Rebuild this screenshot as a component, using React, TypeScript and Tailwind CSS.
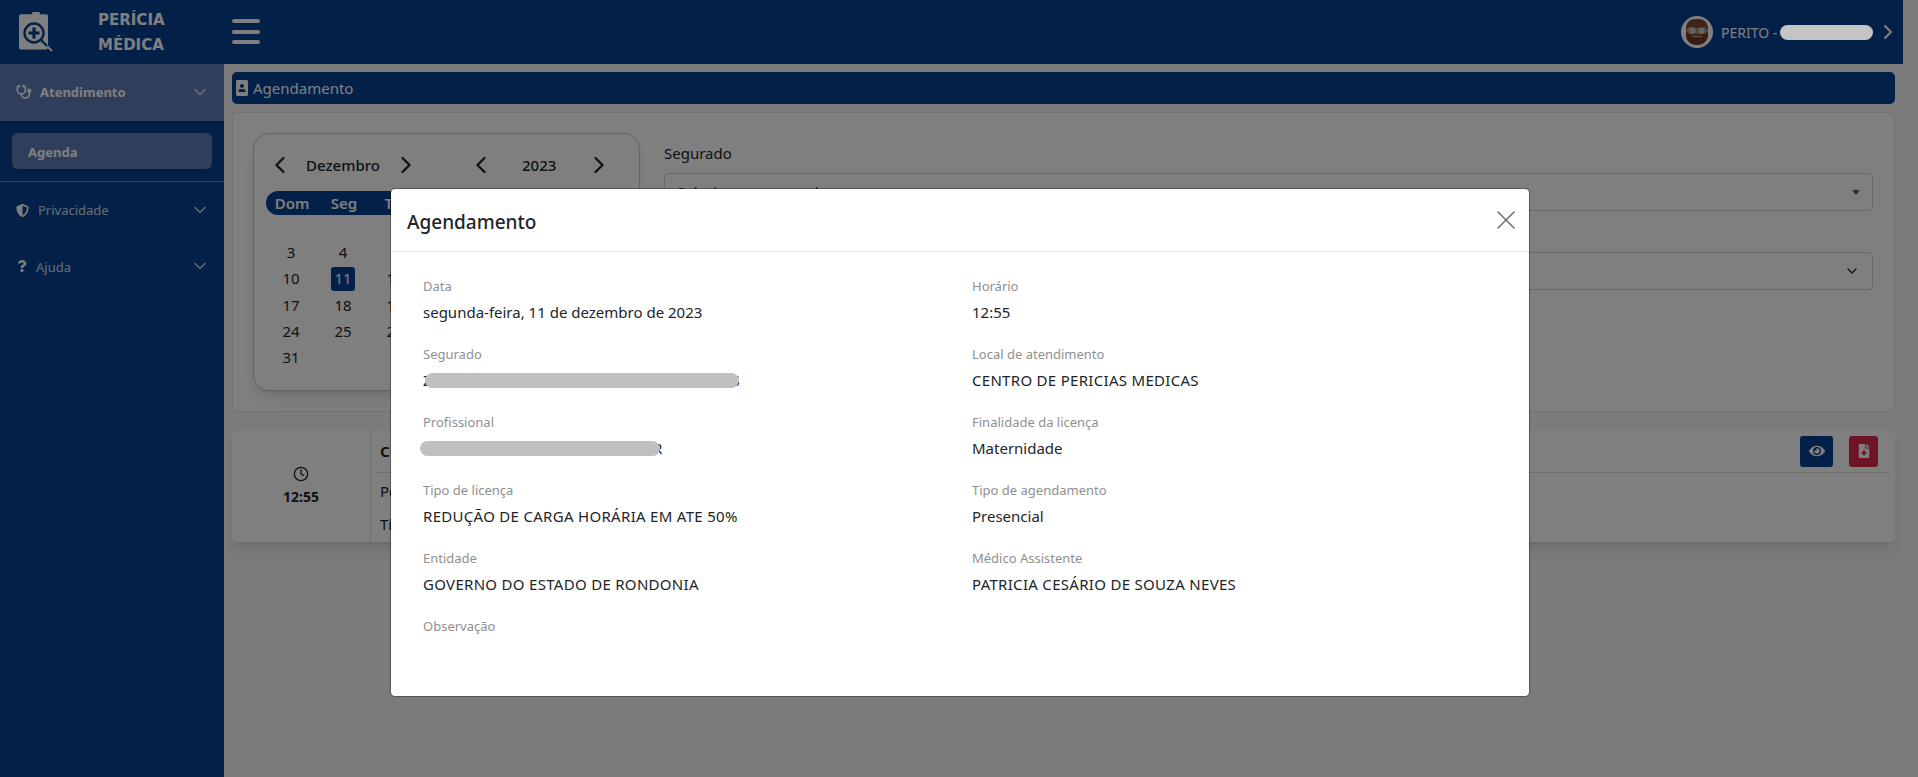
import { ChevronDown, ChevronLeft, ChevronRight, Clock, Stethoscope, X } from 'lucide-react'
import { FaEye, FaFileMedical, FaPortrait, FaQuestion, FaShieldAlt } from 'react-icons/fa'

const fontStack = 'font-["Noto_Sans","Open_Sans",sans-serif]'

const weekDays = ['Dom', 'Seg', 'Ter', 'Qua', 'Qui', 'Sex', 'Sáb']
const days: (number | null)[] = [null, null, null, null, null, 1, 2]
for (let day = 3; day <= 31; day++) days.push(day)

function Logo() {
    return (
        <svg viewBox="0 0 34 40" className="h-10 w-[34px] shrink-0">
            <path d="M13 3.5a4 4 0 0 1 8 0h6a2 2 0 0 1 2 2V38a2 2 0 0 1-2 2H2a2 2 0 0 1-2-2V5.5a2 2 0 0 1 2-2h11z" fill="#fff" transform="translate(0 -1) scale(1 .96)" />
            <circle cx="15" cy="21" r="9.5" fill="none" stroke="#064091" strokeWidth="2.4" />
            <path d="M15 15.5v11M9.5 21h11" stroke="#064091" strokeWidth="3.2" />
            <path d="M22 28l11 11" stroke="#064091" strokeWidth="2.4" />
            <path d="M28 34l5 5" stroke="#fff" strokeWidth="2" />
        </svg>
    )
}

function Avatar() {
    return (
        <svg viewBox="0 0 32 32" className="h-8 w-8 shrink-0">
            <circle cx="16" cy="16" r="16" fill="#fff" />
            <path d="M5 13C5 6 9 3 16 3s11 3 11 10v5c0 7-5 11-11 11S5 25 5 18z" fill="#b08a6f" />
            <path d="M5 14C5 6 9 3 16 3s11 3 11 11l-3-3c-4 1-12 1-16 0z" fill="#7a4a36" />
            <path d="M5 15l3 3c3 1 5 0 8 0s5 1 8 0l3-3v4c0 6-5 10-11 10S5 25 5 19z" fill="#6e3d2a" />
            <circle cx="11.5" cy="14.5" r="2.6" fill="#d9b9a2" stroke="#ddd" />
            <circle cx="20.5" cy="14.5" r="2.6" fill="#a8cfc9" stroke="#ddd" />
            <path d="M11 21c2-1 4-1 5 0 1-1 3-1 5 0" stroke="#e9c5ae" strokeWidth="1" fill="none" />
        </svg>
    )
}

function Calendar() {
    return (
        <div className="h-[258px] w-[387px] shrink-0 rounded-2xl border border-[#c8c8c8] bg-white px-3 pt-[19px] shadow-lg">
            <div className="flex h-6 items-center text-[15px] font-medium text-[#212529]">
                <ChevronLeft className="h-7 w-7 shrink-0" />
                <span className="ml-3 w-[75px]">Dezembro</span>
                <ChevronRight className="ml-[11px] h-7 w-7 shrink-0" />
                <ChevronLeft className="ml-[47px] h-7 w-7 shrink-0" />
                <span className="ml-[27px] w-9">2023</span>
                <ChevronRight className="ml-[27px] h-7 w-7 shrink-0" />
            </div>
            <div className="mt-[14px] grid h-6 grid-cols-[repeat(7,52px)] items-center rounded-full bg-[#064091] text-center text-[15px] font-semibold text-white">
                {weekDays.map((day) => (
                    <span key={day}>{day}</span>
                ))}
            </div>
            <div className="-ml-px -mt-[2px] grid grid-cols-[repeat(7,52px)] text-center text-[15px] text-[#212529]">
                {days.map((day, index) => (
                    <div key={index} className="flex h-[26.3px] items-center justify-center">
                        {day === 11 ? (
                            <span className="flex h-6 w-6 items-center justify-center rounded-[3px] bg-[#064091] text-white">{day}</span>
                        ) : (
                            day
                        )}
                    </div>
                ))}
            </div>
        </div>
    )
}

function Sidebar() {
    return (
        <aside className="flex w-56 shrink-0 flex-col bg-[#064091] text-[13px] text-white">
            <div className="flex h-[57px] items-center bg-[#5f7db5] pb-px pl-4 pr-[14px] font-bold">
                <Stethoscope className="h-4 w-4" strokeWidth={2.5} />
                <span className="ml-2 pt-[2px]">Atendimento</span>
                <ChevronDown className="ml-auto h-5 w-5 opacity-70" />
            </div>
            <div className="border-b border-[#5f7db5] px-3 py-3">
                <div className="flex h-9 items-center rounded-md bg-[#5f7db5] px-4 pt-[3px] font-bold">Agenda</div>
            </div>
            <div className="flex h-[56px] items-center pl-4 pr-[14px]">
                <FaShieldAlt className="h-[13px] w-[13px]" />
                <span className="ml-[9px] pt-[2px] opacity-80">Privacidade</span>
                <ChevronDown className="ml-auto h-5 w-5 opacity-70" />
            </div>
            <div className="flex h-[56px] items-center pl-4 pr-[14px]">
                <FaQuestion className="h-3 w-3" />
                <span className="ml-2 pt-1 opacity-80">Ajuda</span>
                <ChevronDown className="ml-auto h-5 w-5 opacity-70" />
            </div>
        </aside>
    )
}

function Field({ label, caps, children }: { label: string; caps?: boolean; children?: React.ReactNode }) {
    return (
        <div className="h-[68px] pt-[11px]">
            <div className="text-[13px] leading-5 text-[#8f8f8f]">{label}</div>
            <div className={`mt-[6px] flex h-5 items-center text-[15px] leading-5 text-[#212529] ${caps ? 'tracking-[0.3px]' : ''}`}>{children}</div>
        </div>
    )
}

function Redacted({ className }: { className: string }) {
    return <span className={`relative z-10 h-[15px] rounded-full bg-[#c0c0c0] ${className}`} />
}

function Modal() {
    return (
        <div className="absolute inset-0 bg-black/50">
            {/* mascara do nome no cabecalho, fica por cima do backdrop */}
            <span className="absolute left-[1780px] top-[25px] h-[15px] w-[93px] rounded-full bg-[#c4c4c4]" />
            <div className="absolute left-[390px] top-[188px] h-[509px] w-[1140px] rounded-[5px] border border-black/30 bg-white bg-clip-padding">
                <div className="flex h-[63px] items-center justify-between border-b border-[#dee2e6] pl-4 pr-[7px]">
                    <h5 className="pt-1 text-[19px] font-medium text-[#212529]">Agendamento</h5>
                    <X className="h-8 w-8 text-[#6f6f6f]" strokeWidth={1.2} />
                </div>
                <div className="grid grid-cols-[549px_1fr] pl-8 pt-[13px]">
                    <Field label="Data">segunda-feira, 11 de dezembro de 2023</Field>
                    <Field label="Horário">12:55</Field>
                    <Field label="Segurado">
                        <span>Z</span>
                        <Redacted className="-ml-[7px] w-[314px]" />
                        <span className="-ml-[7px]">S</span>
                    </Field>
                    <Field label="Local de atendimento" caps>CENTRO DE PERICIAS MEDICAS</Field>
                    <Field label="Profissional">
                        <Redacted className="-ml-[3px] w-[240px]" />
                        <span className="-ml-[7px]">R</span>
                    </Field>
                    <Field label="Finalidade da licença">Maternidade</Field>
                    <Field label="Tipo de licença" caps>REDUÇÃO DE CARGA HORÁRIA EM ATE 50%</Field>
                    <Field label="Tipo de agendamento">Presencial</Field>
                    <Field label="Entidade" caps>GOVERNO DO ESTADO DE RONDONIA</Field>
                    <Field label="Médico Assistente" caps>PATRICIA CESÁRIO DE SOUZA NEVES</Field>
                    <Field label="Observação" />
                </div>
            </div>
        </div>
    )
}

export default function App() {
    return (
        <div className={`relative h-[777px] overflow-hidden bg-[#f7f7f8] pr-[15px] ${fontStack}`}>
            <header className="flex h-16 items-center bg-[#064091] text-white">
                <div className="flex w-[232px] shrink-0 items-center pl-[19px]">
                    <Logo />
                    <div className="ml-[45px] pt-[2px] font-['DejaVu_Sans',sans-serif] text-[15px] font-bold leading-[25px]">
                        <div>PERÍCIA</div>
                        <div>MÉDICA</div>
                    </div>
                </div>
                <svg viewBox="0 0 28 26" className="h-[26px] w-7">
                    <path d="M2 2h24M2 13h24M2 23h24" stroke="#fff" strokeWidth="4" strokeLinecap="round" />
                </svg>
                <div className="ml-auto flex items-center pr-[3px]">
                    <Avatar />
                    <span className="ml-2 w-[152px] text-[14px]">PERITO - K</span>
                    <ChevronRight className="ml-[3px] h-6 w-6" />
                </div>
            </header>
            <div className="flex h-[713px]">
                <Sidebar />
                <main className="min-w-0 flex-1 px-2 pt-2">
                    <div className="flex h-8 items-center gap-[3px] rounded-[5px] bg-[#064091] px-[2px] text-[15px] text-white">
                        <FaPortrait className="h-4 w-4" />
                        Agendamento
                    </div>
                    <section className="mt-2 flex h-[300px] rounded-[5px] border border-[#e2e2e2] bg-white pl-5 pr-[21px] pt-5">
                        <Calendar />
                        <div className="ml-6 min-w-0 flex-1 pt-[10px] text-[15px] text-[#212529]">
                            <label className="block leading-5">Segurado</label>
                            <div className="mt-[10px] flex h-[38px] items-center rounded-[4px] border border-[#ced4da] px-3">
                                Selecione o segurado
                                <span className="ml-auto h-0 w-0 border-x-4 border-t-[5px] border-x-transparent border-t-[#555]" />
                            </div>
                            <div className="mt-[41px] flex h-[38px] items-center justify-end rounded-[4px] border border-[#ced4da] px-3">
                                <ChevronDown className="h-4 w-4" />
                            </div>
                        </div>
                    </section>
                    <section className="mt-[18px] flex h-[112px] rounded-[5px] bg-white shadow-lg">
                        <div className="flex w-[139px] flex-col items-center justify-center gap-1 border-r border-[#ddd] text-[#212529]">
                            <Clock className="h-4 w-4" />
                            <b className="text-[14px]">12:55</b>
                        </div>
                        <div className="min-w-0 flex-1 px-[5px] text-[15px] text-[#212529]">
                            <div className="flex h-[43px] items-center border-b border-[#ddd] pl-[4px] pr-3">
                                <b>CENTRO</b>
                                <span className="ml-auto flex h-[31px] w-[33px] items-center justify-center rounded-[3px] bg-[#064091] text-white">
                                    <FaEye className="h-4 w-4" />
                                </span>
                                <span className="ml-4 flex h-[31px] w-[29px] items-center justify-center rounded-[3px] bg-[#dc2a4a] text-white">
                                    <FaFileMedical className="h-[14px] w-[14px]" />
                                </span>
                            </div>
                            <div className="mt-2 pl-[4px] leading-5">Perito</div>
                            <div className="mt-[13px] pl-[4px] leading-5">Tipo</div>
                        </div>
                    </section>
                </main>
            </div>
            <Modal />
        </div>
    )
}
